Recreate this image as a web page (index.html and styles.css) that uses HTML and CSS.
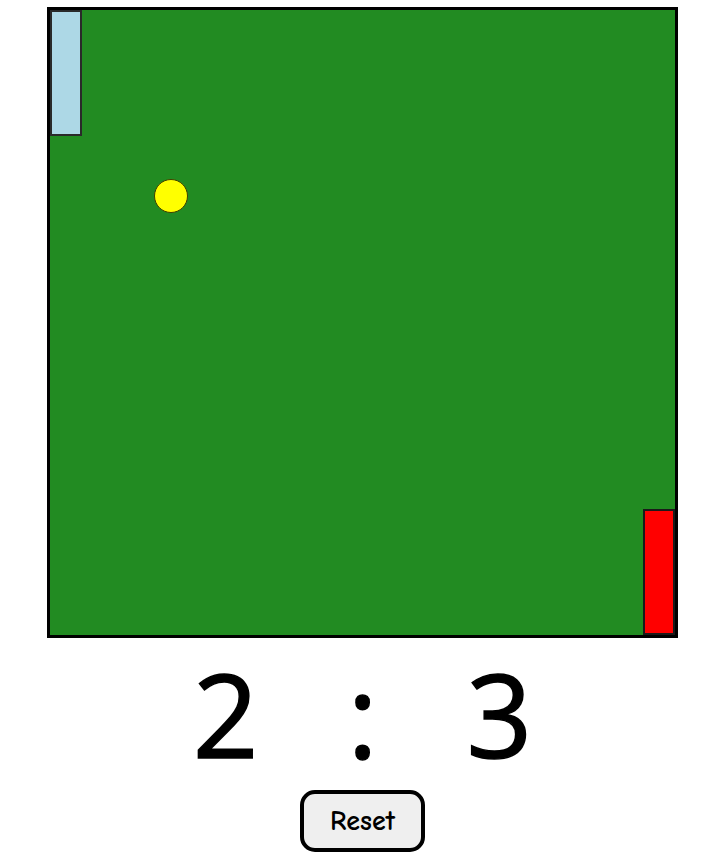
FILE: index.html
```html
<!DOCTYPE html>
<html lang="en">
<head>
    <meta charset="UTF-8">
    <meta name="viewport" content="width=device-width, initial-scale=1.0">
    <title>Pong</title>
    <link rel="stylesheet" href="styles.css">
</head>
<body>

    <div id="game">
        <div id="board">
            <div class="paddle" id="paddleLeft"></div>
            <div class="paddle" id="paddleRight"></div>
            <div id="ball"></div>
        </div>

        <div id="score">
            <span id="scoreLeft">2</span>
            <span id="separator">:</span>
            <span id="scoreRight">3</span>
        </div>

        <button type="button" id="resetButton">Reset</button>
    </div>

</body>
</html>
```

FILE: styles.css
```css
body {
    margin: 0;
    padding: 0;
    background-color: white;
}

#game {
    display: flex;
    flex-direction: column;
    align-items: center;
    padding-top: 7px;
    padding-right: 1px;
}

#board {
    position: relative;
    width: 625px;
    height: 625px;
    background-color: #228b22;
    border: 3px solid black;
}

.paddle {
    position: absolute;
    width: 28px;
    height: 122px;
    border: 2px solid #1a1a1a;
}

#paddleLeft {
    left: 0;
    top: 0;
    background-color: lightblue;
    border-color: #2a2a2a;
}

#paddleRight {
    right: 0;
    bottom: 0;
    background-color: red;
}

#ball {
    position: absolute;
    left: 104px;
    top: 169px;
    width: 32px;
    height: 32px;
    border-radius: 50%;
    background-color: yellow;
    border: 1px solid #3f3f00;
}

#score {
    display: flex;
    justify-content: center;
    gap: 89px;
    margin-top: 12px;
    font-family: "Open Sans", sans-serif;
    font-size: 115px;
    line-height: 128px;
    color: black;
    -webkit-text-stroke: 1.5px black;
}

#resetButton {
    margin-top: 12px;
    width: 125px;
    height: 62px;
    border: 4px solid black;
    border-radius: 15px;
    background-color: #efefef;
    font-family: "Comic Sans MS", "Comic Neue", cursive;
    font-size: 28px;
    font-weight: 600;
    color: black;
    cursor: pointer;
}
```
